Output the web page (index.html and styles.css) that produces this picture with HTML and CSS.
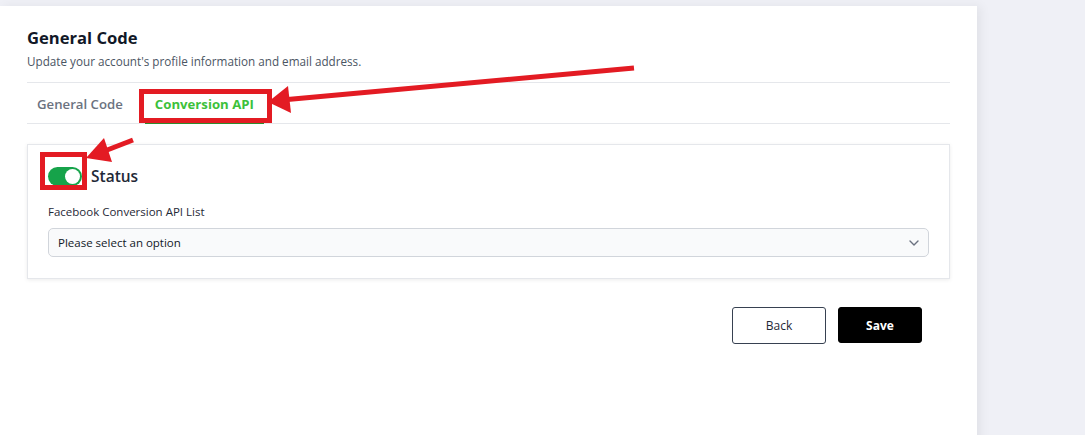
FILE: index.html
```html
<!DOCTYPE html>
<html>
<head>
<meta charset="utf-8">
<link rel="stylesheet" href="styles.css">
</head>
<body>
<div class="page">
  <div class="panel">
    <h1 class="title">General Code</h1>
    <p class="subtitle">Update your account's profile information and email address.</p>
    <div class="tabs">
      <div class="tab">General Code</div>
      <div class="tab active">Conversion API</div>
    </div>
    <div class="card">
      <div class="status-row">
        <span class="toggle"><span class="knob"></span></span>
        <span class="status">Status</span>
      </div>
      <label class="field-label">Facebook Conversion API List</label>
      <div class="select">
        <span>Please select an option</span>
        <svg class="chev" width="10" height="6" viewBox="0 0 10 6"><path d="M1 1l4 4 4-4" fill="none" stroke="#6b7280" stroke-width="1.4" stroke-linecap="round" stroke-linejoin="round"/></svg>
      </div>
    </div>
    <div class="actions">
      <button class="btn back">Back</button>
      <button class="btn save">Save</button>
    </div>
  </div>
  <svg class="annot" width="1085" height="435" viewBox="0 0 1085 435">
    <g fill="none" stroke="#e31b23" stroke-width="5">
      <rect x="141.5" y="91.5" width="128" height="29"/>
      <rect x="42.5" y="154.5" width="42" height="33"/>
      <line x1="634" y1="68" x2="282" y2="100"/>
      <line x1="133" y1="140" x2="102" y2="152"/>
    </g>
    <g fill="#e31b23">
      <polygon points="268,102 288,86 291,113"/>
      <polygon points="86,158 104,138 112,162"/>
    </g>
  </svg>
</div>
</body>
</html>
```
FILE: styles.css
```css
* { box-sizing: border-box; }
html, body { margin: 0; padding: 0; }
body {
  background: #eff0f6;
  font-family: "Open Sans", "Liberation Sans", sans-serif;
  width: 1085px;
  height: 435px;
  overflow: hidden;
}
.page { position: relative; width: 1085px; height: 435px; padding-top: 6px; }
.panel {
  width: 977px;
  height: 440px;
  background: #fff;
  padding: 21px 27px 0 27px;
  box-shadow: 4px 0 10px rgba(0,0,0,0.06);
}
.title {
  margin: 0;
  font-size: 16.6px;
  line-height: 22px;
  font-weight: 700;
  color: #111827;
}
.subtitle {
  margin: 3px 0 0;
  font-size: 11.7px;
  line-height: 18px;
  color: #4b5563;
}
.tabs {
  margin-top: 12px;
  display: flex;
  gap: 12px;
  border-top: 1px solid #e5e7eb;
  border-bottom: 1px solid #e5e7eb;
  height: 42px;
}
.tab {
  padding: 0 10px;
  font-size: 13.2px;
  font-weight: 600;
  color: #6b7280;
  display: flex;
  align-items: center;
  border-bottom: 2px solid transparent;
  margin-bottom: -1px;
  padding-top: 3px;
}
.tab.active { color: #3cc13b; border-bottom-color: #2e8b2e; font-weight: 700; }
.card {
  margin-top: 20px;
  border: 1px solid #e5e7eb;
  box-shadow: 0 1px 4px rgba(0,0,0,0.08);
  padding: 21px 20px 21px 20px;
  background: #fff;
}
.status-row { display: flex; align-items: center; gap: 9px; height: 20px; }
.toggle {
  width: 34px; height: 19px; border-radius: 10px;
  background: #16a34a; position: relative; display: inline-block;
}
.knob {
  position: absolute; right: 2px; top: 2px;
  width: 15px; height: 15px; border-radius: 50%; background: #fff;
}
.status { font-size: 15.5px; font-weight: 600; color: #1f2937; }
.field-label {
  display: block;
  margin-top: 17px;
  font-size: 11.5px;
  line-height: 18px;
  color: #1f2937;
}
.select {
  margin-top: 7px;
  height: 29px;
  border: 1px solid #d1d5db;
  border-radius: 5px;
  background: #f9fafb;
  display: flex;
  align-items: center;
  justify-content: space-between;
  padding: 0 9px 0 9px;
  font-size: 11.5px;
  color: #111827;
}
.actions {
  display: flex;
  justify-content: flex-end;
  gap: 12px;
  margin-top: 28px;
  padding-right: 28px;
}
.btn {
  font-family: "Open Sans", "Liberation Sans", sans-serif;
  font-size: 12px;
  border-radius: 3px;
  cursor: pointer;
}
.back { width: 94px; height: 37px; background: #fff; border: 1px solid #374151; color: #1f2937; }
.save { width: 84px; height: 36px; background: #000; border: 1px solid #000; color: #fff; font-weight: 700; }
.annot { position: absolute; left: 0; top: 0; pointer-events: none; }
```
